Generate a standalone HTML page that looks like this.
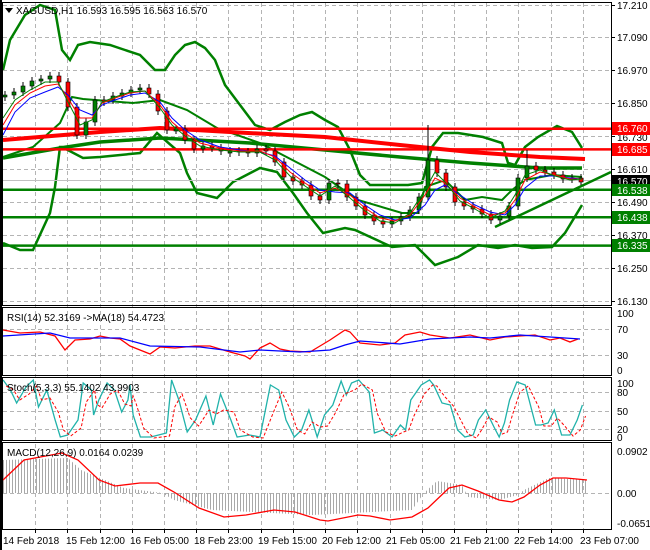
<!DOCTYPE html>
<html><head><meta charset="utf-8"><style>
html,body{margin:0;padding:0;background:#fff;width:650px;height:550px;overflow:hidden}
svg{display:block;font-family:"Liberation Sans",sans-serif}
</style></head><body>
<svg width="650" height="550" xmlns="http://www.w3.org/2000/svg">
<defs>
<pattern id="vs" width="3" height="10" patternUnits="userSpaceOnUse"><rect x="0" y="0" width="1" height="10" fill="#a8a8a8"/></pattern>
</defs>
<g stroke="#b4b4b4" stroke-dasharray="4,3" stroke-width="1" fill="none">
<path d="M35.5 3V529M67.5 3V529M100.5 3V529M132.5 3V529M164.5 3V529M196.5 3V529M228.5 3V529M261.5 3V529M293.5 3V529M325.5 3V529M357.5 3V529M390.5 3V529M422.5 3V529M454.5 3V529M486.5 3V529M518.5 3V529M551.5 3V529M583.5 3V529"/>
<path d="M3 5.5H611M3 37.5H611M3 70.5H611M3 103.5H611M3 136.5H611M3 169.5H611M3 202.5H611M3 235.5H611M3 268.5H611M3 301.5H611M3 329.5H611M3 355.5H611M3 392.5H611M3 411.5H611M3 429.5H611M3 493.5H611"/>
</g>
<polyline fill="none" stroke="#008000" stroke-width="2.5" points="3,70 10,40 25,15 40,5 55,10 62,50 70,60 78,45 90,42 110,45 125,50 140,55 155,70 165,70 175,55 185,45 195,42 205,48 215,60 225,85 240,105 255,125 270,130 285,122 300,115 312,112 325,120 338,127 350,150 360,175 370,185 385,185 408,185 422,183 432,147 443,133 458,133 483,137 502,143 508,163 515,165 525,147 538,137 557,126 572,132 582,148"/>
<polyline fill="none" stroke="#008000" stroke-width="2.5" points="3,243 20,250 33,250 50,213 55,187 60,147 62,147 83,158 100,157 140,153 157,133 180,153 187,173 197,193 217,198 233,182 260,168 277,172 293,193 307,213 323,233 345,228 355,230 392,247 415,245 435,265 458,257 478,245 498,248 515,245 532,248 552,247 565,233 582,205"/>
<polyline fill="none" stroke="#008000" stroke-width="2" points="3,157 33,147 60,123 72,97 83,99 133,103 160,100 187,110 217,128 260,143 277,152 325,177 358,200 402,213 418,213 425,187 445,180 465,200 482,197 502,200 512,190 525,180 552,175 582,177"/>
<polyline fill="none" stroke="#ff0000" stroke-width="4" points="3,140 100,132 160,128 230,132 325,137 400,145 470,152 540,157 585,159"/>
<polyline fill="none" stroke="#008000" stroke-width="3.5" points="3,158 60,148 100,142 160,138 250,143 325,150 400,157 470,163 540,168 582,168"/>
<line x1="3" y1="128.7" x2="611" y2="128.7" stroke="#ff0000" stroke-width="2.5"/>
<line x1="3" y1="149.4" x2="611" y2="149.4" stroke="#ff0000" stroke-width="2.5"/>
<line x1="3" y1="180.5" x2="611" y2="180.5" stroke="#c0c0c0" stroke-width="1"/>
<line x1="3" y1="189.8" x2="611" y2="189.8" stroke="#008000" stroke-width="2.5"/>
<line x1="3" y1="217.3" x2="611" y2="217.3" stroke="#008000" stroke-width="2.5"/>
<line x1="3" y1="245.6" x2="611" y2="245.6" stroke="#008000" stroke-width="2.5"/>
<line x1="495" y1="227" x2="611" y2="172" stroke="#008000" stroke-width="2.5"/>
<!-- candles -->
<path fill="none" stroke="#000" stroke-width="1" d="M5 91V101M14 88V99M23 82V96M32 77V90M41 75V85M50 72V83M59 72V86M68 78V111M77 103V139M86 118V139M95 96V126M104 96V106M113 92V104M122 89V100M131 86V97M140 84V94M149 84V98M158 90V115M167 107V134M176 125V134M185 125V144M194 136V153M203 142V153M212 142V152M221 144V155M230 147V157M239 147V156M248 148V157M257 145V157M266 145V155M275 147V166M284 158V181M293 173V185M302 177V189M311 181V200M320 192V204M329 179V204M338 179V188M347 180V201M356 193V210M365 202V219M374 211V225M383 217V228M392 217V228M401 213V225M410 206V221M419 193V214M428 125V201M437 156V177M446 169V191M455 183V206M464 198V210M473 202V213M482 205V218M491 210V224M500 212V224M509 202V220M518 174V210M527 150V182M536 162V174M545 166V176M554 168V179M563 171V183M572 174V183M581 174V185"/>
<g stroke="#000" stroke-width="0.6" fill="#008000">
<rect x="3" y="95" width="4" height="2"/><rect x="12" y="92" width="4" height="3"/><rect x="21" y="86" width="4" height="6"/><rect x="30" y="81" width="4" height="5"/><rect x="39" y="79" width="4" height="2"/><rect x="48" y="76" width="4" height="3"/>
<rect x="84" y="122" width="4" height="13"/><rect x="93" y="100" width="4" height="22"/><rect x="111" y="96" width="4" height="4"/><rect x="120" y="93" width="4" height="3"/><rect x="129" y="90" width="4" height="3"/><rect x="138" y="88" width="4" height="2"/>
<rect x="174" y="129" width="4" height="2"/><rect x="201" y="146" width="4" height="3"/><rect x="228" y="151" width="4" height="2"/><rect x="255" y="149" width="4" height="4"/><rect x="327" y="183" width="4" height="17"/>
<rect x="390" y="221" width="4" height="3"/><rect x="399" y="217" width="4" height="4"/><rect x="408" y="210" width="4" height="7"/><rect x="417" y="197" width="4" height="13"/><rect x="426" y="160" width="4" height="37"/>
<rect x="498" y="216" width="4" height="4"/><rect x="507" y="206" width="4" height="10"/><rect x="516" y="178" width="4" height="28"/><rect x="525" y="166" width="4" height="12"/><rect x="570" y="178" width="4" height="1"/>
</g>
<g stroke="#000" stroke-width="0.6" fill="#ff0000">
<rect x="57" y="76" width="4" height="6"/><rect x="66" y="82" width="4" height="25"/><rect x="75" y="107" width="4" height="28"/><rect x="102" y="100" width="4" height="2"/>
<rect x="147" y="88" width="4" height="6"/><rect x="156" y="94" width="4" height="17"/><rect x="165" y="111" width="4" height="19"/><rect x="183" y="129" width="4" height="11"/><rect x="192" y="140" width="4" height="9"/>
<rect x="210" y="146" width="4" height="2"/><rect x="219" y="148" width="4" height="3"/><rect x="237" y="151" width="4" height="1"/><rect x="246" y="152" width="4" height="1"/><rect x="264" y="149" width="4" height="2"/>
<rect x="273" y="151" width="4" height="11"/><rect x="282" y="162" width="4" height="15"/><rect x="291" y="177" width="4" height="4"/><rect x="300" y="181" width="4" height="4"/><rect x="309" y="185" width="4" height="11"/><rect x="318" y="196" width="4" height="4"/>
<rect x="336" y="183" width="4" height="1"/><rect x="345" y="184" width="4" height="13"/><rect x="354" y="197" width="4" height="9"/><rect x="363" y="206" width="4" height="9"/><rect x="372" y="215" width="4" height="6"/><rect x="381" y="221" width="4" height="3"/>
<rect x="435" y="160" width="4" height="13"/><rect x="444" y="173" width="4" height="14"/><rect x="453" y="187" width="4" height="15"/><rect x="462" y="202" width="4" height="4"/><rect x="471" y="206" width="4" height="3"/><rect x="480" y="209" width="4" height="5"/><rect x="489" y="214" width="4" height="6"/>
<rect x="534" y="166" width="4" height="4"/><rect x="543" y="170" width="4" height="2"/><rect x="552" y="172" width="4" height="3"/><rect x="561" y="175" width="4" height="4"/><rect x="579" y="178" width="4" height="4"/>
</g>
<polyline fill="none" stroke="#0000ff" stroke-width="1" points="3,135 15,112 30,98 45,92 58,87 68,95 80,110 92,115 102,105 115,100 130,95 145,93 160,102 172,118 185,130 200,140 220,147 240,150 260,152 275,156 290,168 305,180 320,190 335,192 350,193 365,205 380,215 395,220 410,218 425,205 435,190 445,185 460,195 475,205 490,212 505,215 515,205 525,188 540,176 555,176 570,178 582,179"/>
<polyline fill="none" stroke="#ff0000" stroke-width="1" points="3,125 15,105 30,93 45,86 58,84 68,98 80,118 92,118 102,103 115,98 130,93 145,91 160,105 172,122 185,133 200,143 220,148 240,151 260,151 275,157 290,172 305,183 320,193 335,188 350,195 365,208 380,218 395,221 410,215 425,195 435,178 445,183 460,198 475,207 490,215 505,213 515,200 525,180 540,172 555,175 570,179 582,179"/>
<polyline fill="none" stroke="#008000" stroke-width="1" points="3,118 15,100 30,90 45,82 58,82 68,102 80,125 92,120 102,102 115,97 130,92 145,91 160,108 172,125 185,136 200,146 220,150 240,152 260,152 275,160 290,176 305,186 320,196 335,186 350,198 365,211 380,221 395,223 410,213 425,190 435,172 445,182 460,201 475,209 490,218 505,211 515,195 525,175 540,170 555,176 570,180 582,179"/>
<!-- RSI -->
<polyline fill="none" stroke="#ff0000" stroke-width="1.3" points="3,330 20,333 40,332 55,336 65,350 75,340 90,339 100,336 110,338 120,339 130,346 145,352 150,354 160,347 175,348 195,346 210,346 230,352 245,356 250,359 260,348 270,343 280,349 290,351 310,352 320,346 330,340 345,330 350,332 360,343 380,345 395,343 405,335 420,332 430,335 450,338 470,335 490,340 505,337 520,336 535,335 550,340 560,338 570,342 578,339"/>
<polyline fill="none" stroke="#0000ff" stroke-width="1.3" points="3,336 50,333 70,338 120,338 150,346 200,347 240,352 260,350 300,352 330,350 345,345 360,341 400,344 430,339 470,337 490,338 520,335 580,339"/>
<!-- Stoch -->
<g transform="matrix(1.04 0 0 1 0 0)">
<polyline vector-effect="non-scaling-stroke" fill="none" stroke="#20b2aa" stroke-width="1.3" points="3,380 10,390 16,403 25,387 32,380 37,407 45,390 53,420 58,437 65,435 75,420 80,383 88,390 90,415 95,400 103,383 110,390 117,412 123,400 125,385 128,415 135,437 145,437 160,433 165,380 172,400 180,432 188,420 198,396 205,425 212,394 222,420 228,437 240,435 250,437 260,385 268,390 275,420 283,437 290,430 297,410 305,437 312,415 320,405 328,381 333,395 338,383 345,380 355,392 360,433 368,430 377,437 385,425 390,430 395,400 405,385 413,380 417,385 425,403 433,405 440,430 447,437 455,435 460,420 467,410 475,427 480,437 485,423 490,400 497,382 505,385 515,425 520,425 527,423 533,410 540,435 548,435 555,420 560,405"/>
<g transform="translate(3,2)">
<polyline vector-effect="non-scaling-stroke" fill="none" stroke="#ff0000" stroke-width="1" stroke-dasharray="3,2" points="3,384 10,388 16,398 25,392 32,384 37,398 45,396 53,410 58,428 65,434 75,426 80,400 88,388 90,402 95,406 103,392 110,388 117,402 123,404 125,394 128,402 135,426 145,436 160,434 165,405 172,392 180,416 188,424 198,408 205,412 212,408 222,410 228,428 240,435 250,436 260,410 268,390 275,405 283,428 290,432 297,420 305,425 312,424 320,410 328,392 333,390 338,388 345,382 355,388 360,412 368,430 377,434 385,430 390,428 395,414 405,392 413,383 417,384 425,395 433,404 440,418 447,432 455,436 460,428 467,415 475,420 480,432 485,430 490,412 497,390 505,384 515,405 520,424 527,424 533,416 540,424 548,434 555,428 560,414"/>
</g>
</g>
<!-- MACD -->
<polygon fill="url(#vs)" points="3,493 3,460 68,458 81,470 124,488 162,493 174,500 212,510 312,515 412,510 424,493 437,481 462,485 468,497 499,500 518,495 524,490 549,478 587,480 587,493"/>
<polyline fill="none" stroke="#ff0000" stroke-width="1.3" points="3,480 24,460 62,453 78,460 99,480 115,486 140,483 158,483 174,492 199,508 224,517 246,515 274,510 295,512 320,520 328,521 358,515 370,516 390,520 412,517 428,508 449,488 462,485 478,491 499,500 512,502 524,497 540,485 553,478 566,478 587,480"/>
<g fill="none" stroke="#000" stroke-width="1">
<rect x="2.5" y="2.5" width="609" height="303"/>
<rect x="2.5" y="307.5" width="609" height="68"/>
<rect x="2.5" y="377.5" width="609" height="63"/>
<rect x="2.5" y="442.5" width="609" height="87"/>
<path d="M611 5.5h4M611 37.5h4M611 70.5h4M611 103.5h4M611 136.5h4M611 169.5h4M611 202.5h4M611 235.5h4M611 268.5h4M611 301.5h4M35.5 529v4M67.5 529v4M100.5 529v4M132.5 529v4M164.5 529v4M196.5 529v4M228.5 529v4M261.5 529v4M293.5 529v4M325.5 529v4M357.5 529v4M390.5 529v4M422.5 529v4M454.5 529v4M486.5 529v4M518.5 529v4M551.5 529v4M583.5 529v4"/>
</g>
<rect x="0" y="0" width="2" height="550" fill="#000"/>
<g font-size="10" fill="#000">
<polygon points="5,8 13,8 9,13"/>
<text x="16" y="14">XAGUSD,H1  16.593 16.595 16.563 16.570</text>
<text x="7" y="321">RSI(14) 52.3169  -&gt;MA(18) 54.4723</text>
<text x="7" y="391">Stoch(5,3,3) 55.1402 43.9903</text>
<text x="7" y="456">MACD(12,26,9) 0.0164 0.0239</text>
<text x="617" y="9">17.210</text><text x="617" y="41">17.090</text><text x="617" y="74">16.970</text><text x="617" y="107">16.850</text>
<text x="617" y="141">16.730</text><text x="617" y="173">16.610</text><text x="617" y="206">16.490</text><text x="617" y="239">16.370</text>
<text x="617" y="272">16.250</text><text x="617" y="305">16.130</text>
<text x="617" y="317">100</text><text x="617" y="333">70</text><text x="617" y="359">30</text><text x="617" y="374">0</text>
<text x="617" y="387">100</text><text x="617" y="396">80</text><text x="617" y="415">50</text><text x="617" y="433">20</text><text x="617" y="441">0</text>
<text x="617" y="455">0.0902</text><text x="617" y="497">0.00</text><text x="617" y="527">-0.0651</text>
<text x="3" y="544">14 Feb 2018</text><text x="66" y="544">15 Feb 12:00</text><text x="130" y="544">16 Feb 05:00</text>
<text x="194" y="544">18 Feb 23:00</text><text x="258" y="544">19 Feb 15:00</text><text x="322" y="544">20 Feb 12:00</text>
<text x="386" y="544">21 Feb 05:00</text><text x="450" y="544">21 Feb 21:00</text><text x="514" y="544">22 Feb 14:00</text>
<text x="580" y="544">23 Feb 07:00</text>
</g>
<g font-size="10" fill="#fff">
<rect x="612" y="122" width="38" height="13" fill="#ff0000"/><text x="617" y="132">16.760</text>
<rect x="612" y="143" width="38" height="13" fill="#ff0000"/><text x="617" y="153">16.685</text>
<rect x="612" y="175" width="38" height="12" fill="#000"/><text x="617" y="185">16.570</text>
<rect x="612" y="184" width="38" height="12" fill="#008000"/><text x="617" y="194">16.538</text>
<rect x="612" y="211" width="38" height="13" fill="#008000"/><text x="617" y="221">16.438</text>
<rect x="612" y="239" width="38" height="13" fill="#008000"/><text x="617" y="249">16.335</text>
</g>
</svg>
</body></html>
